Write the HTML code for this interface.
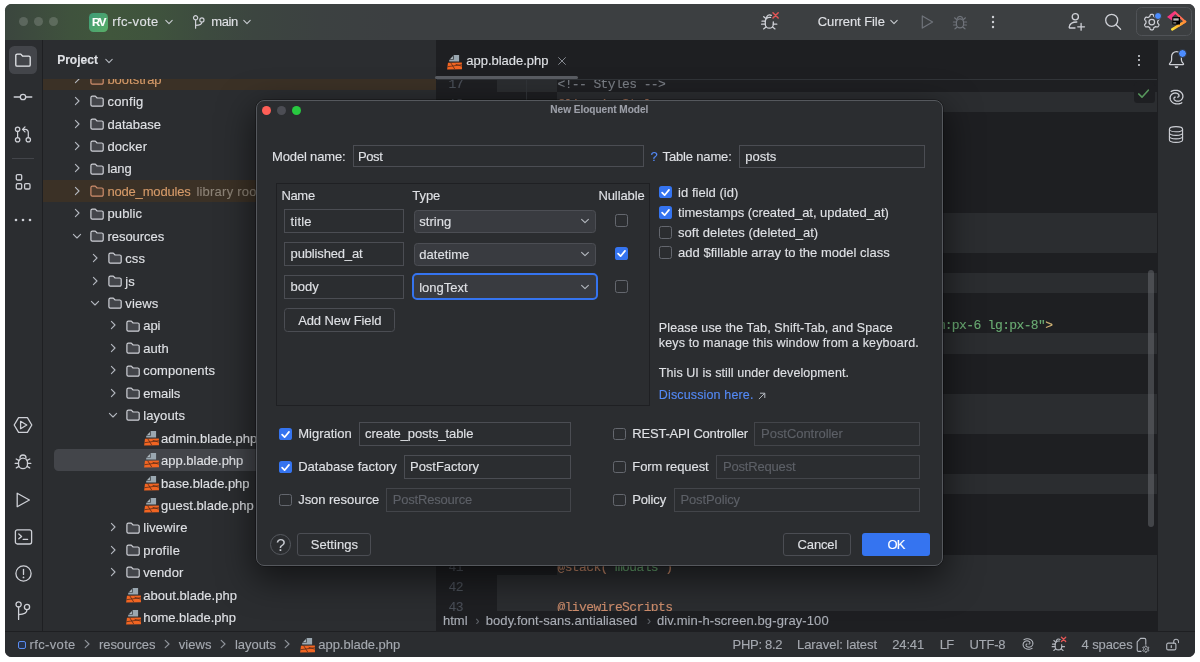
<!DOCTYPE html>
<html lang="en"><head><meta charset="utf-8"><title>New Eloquent Model</title><style>
html,body{margin:0;padding:0;background:#fff;}
body{width:1200px;height:662px;position:relative;overflow:hidden;will-change:transform;font-family:"Liberation Sans",sans-serif;}
.a{position:absolute;display:block;}
.t{position:absolute;display:block;white-space:pre;line-height:1;-webkit-text-stroke:0.120px currentColor;}
#win{position:absolute;left:5px;top:4px;width:1189.6px;height:653.300px;border-radius:6.500px;overflow:hidden;background:#2b2d30;}
#dlg{background:#2b2d30;border:1px solid #55585d;border-radius:8px;box-sizing:border-box;box-shadow:0 11px 34px 3px rgba(0,0,0,.55),0 0 0 .5px rgba(0,0,0,.5);}
</style></head><body>
<div id="win"><div class="a" style="left:-5px;top:-4px;width:1200px;height:662px;">
<div class="a" style="left:5.00px;top:4.00px;width:1189.60px;height:36.00px;background:linear-gradient(90deg,#3b463e 0px,#3d4b3e 28px,#3f523d 65px,#40563c 105px,#3f533d 150px,#3d4b3f 200px,#3c4540 250px,#3c4141 315px,#3c3f41 390px,#3c3f41 100%);"></div>
<div class="a" style="left:18.60px;top:17.00px;width:9.20px;height:9.20px;background:rgba(255,255,255,0.16);border-radius:50%;"></div>
<div class="a" style="left:33.70px;top:17.00px;width:9.20px;height:9.20px;background:rgba(255,255,255,0.16);border-radius:50%;"></div>
<div class="a" style="left:48.70px;top:17.00px;width:9.20px;height:9.20px;background:rgba(255,255,255,0.16);border-radius:50%;"></div>
<div class="a" style="left:89.00px;top:12.50px;width:19.00px;height:19.00px;border-radius:4.5px;background:linear-gradient(135deg,#3d9b78,#5aae67);"></div>
<span class="t" style="left:92.00px;top:16.57px;font-size:11.5px;color:#ffffff;font-weight:700;letter-spacing:-1.234px;">RV</span>
<span class="t" style="left:112.30px;top:14.90px;font-size:13px;color:#dfe1e5;letter-spacing:0.370px;">rfc-vote</span>
<svg class="a" style="left:162.60px;top:16.20px;" width="12" height="12" viewBox="0 0 12 12" fill="none"><path d="M2.8 4.4 L6 7.6 L9.2 4.4" stroke="#c9ccd1" stroke-width="1.1" stroke-linecap="round" stroke-linejoin="round"/></svg>
<svg class="a" style="left:192.00px;top:14.00px;" width="14" height="16" viewBox="0 0 14 16" fill="none"><circle cx="3.600" cy="3.800" r="2.100" stroke="#ced0d6" stroke-width="1.200"/><circle cx="9.900" cy="5.900" r="2.100" stroke="#ced0d6" stroke-width="1.200"/><path d="M3.600 6V14.200M3.600 11.400c4.600 0 6.300-1.100 6.300-3.400" stroke="#ced0d6" stroke-width="1.200" stroke-linecap="round"/></svg>
<span class="t" style="left:211.30px;top:14.90px;font-size:13px;color:#dfe1e5;letter-spacing:-0.395px;">main</span>
<svg class="a" style="left:241.10px;top:16.20px;" width="12" height="12" viewBox="0 0 12 12" fill="none"><path d="M2.8 4.4 L6 7.6 L9.2 4.4" stroke="#c9ccd1" stroke-width="1.1" stroke-linecap="round" stroke-linejoin="round"/></svg>
<svg class="a" style="left:759.00px;top:9.70px;" width="22" height="20" viewBox="0 0 22 20" fill="none"><g stroke="#ced0d6" stroke-width="1.3" stroke-linecap="round"><path d="M6.300 11.400a4 4 0 0 1 4-4h1.300"/><path d="M14.300 11.800v2.400a4 4 0 0 1-8 0v-2.800"/><path d="M7.600 8.100a3 3 0 0 1 4.700-2.700"/><path d="M6.300 11.200H3M6.300 14.200H2.600M7 17l-2.400 1.900M14.300 14.200h3.500M13.600 17l2.400 1.900M6.900 8.600L4.700 6.700"/></g><path d="M14 2.800l5.200 5.200M19.200 2.800L14 8" stroke="#e05555" stroke-width="1.5" stroke-linecap="round"/></svg>
<span class="t" style="left:817.80px;top:15.20px;font-size:13px;color:#dfe1e5;letter-spacing:-0.076px;">Current File</span>
<svg class="a" style="left:888.00px;top:16.20px;" width="12" height="12" viewBox="0 0 12 12" fill="none"><path d="M2.8 4.4 L6 7.6 L9.2 4.4" stroke="#c9ccd1" stroke-width="1.1" stroke-linecap="round" stroke-linejoin="round"/></svg>
<svg class="a" style="left:919.00px;top:13.70px;" width="16" height="16" viewBox="0 0 16 16" fill="none"><path d="M3.300 1.900L13.600 8 3.300 14.100Z" stroke="#6f737a" stroke-width="1.200" stroke-linejoin="round"/></svg>
<svg class="a" style="left:951.00px;top:12.60px;" width="18" height="18" viewBox="0 0 18 18" fill="none"><g stroke="#6f737a" stroke-width="1.200" stroke-linecap="round"><path d="M6.2 5.6a2.9 2.9 0 0 1 5.6 0"/><rect x="5.4" y="5.8" width="7.2" height="9" rx="3.6"/><path d="M5.4 9H2.4M5.4 12H2.6M12.6 9h3M12.6 12h2.8M5.6 6.6L3.6 4.8M12.4 6.6l2-1.8M6 14.2l-2 1.6M12 14.2l2 1.6"/></g></svg>
<svg class="a" style="left:989.80px;top:13.90px;" width="6" height="6" viewBox="0 0 6 6" fill="none"><circle cx="3" cy="3" r="1.2" fill="#ced0d6"/></svg>
<svg class="a" style="left:989.80px;top:19.00px;" width="6" height="6" viewBox="0 0 6 6" fill="none"><circle cx="3" cy="3" r="1.2" fill="#ced0d6"/></svg>
<svg class="a" style="left:989.80px;top:24.10px;" width="6" height="6" viewBox="0 0 6 6" fill="none"><circle cx="3" cy="3" r="1.2" fill="#ced0d6"/></svg>
<svg class="a" style="left:1066.00px;top:11.00px;" width="22" height="22" viewBox="0 0 22 22" fill="none"><g stroke="#ced0d6" stroke-width="1.300" stroke-linecap="round" stroke-linejoin="round"><circle cx="9.300" cy="5.700" r="3.100"/><path d="M9 17H4.100a.9 .9 0 0 1-.9-1C3.700 13 6.300 11 10.800 11"/><path d="M15.100 12.400v6.800M11.700 15.800h6.800"/></g></svg>
<svg class="a" style="left:1103.00px;top:12.00px;" width="20" height="20" viewBox="0 0 20 20" fill="none"><g stroke="#ced0d6" stroke-width="1.300" stroke-linecap="round"><circle cx="8.700" cy="8.300" r="6"/><path d="M13.100 12.800l4.500 4.500"/></g></svg>
<div class="a" style="left:1135.90px;top:7.40px;width:56.10px;height:28.70px;border:1px solid #505357;border-radius:5.500px;box-sizing:border-box;"></div>
<svg class="a" style="left:1142.00px;top:12.00px;" width="20" height="20" viewBox="0 0 20 20" fill="none"><path d="M15.65 10.10 L15.64 10.36 L15.63 10.61 L15.60 10.86 L15.70 11.14 L16.03 11.48 L16.37 11.86 L16.68 12.27 L16.95 12.70 L16.96 13.07 L16.82 13.38 L16.67 13.68 L16.51 13.97 L16.34 14.26 L16.15 14.55 L15.95 14.82 L15.63 14.99 L15.12 14.98 L14.61 14.91 L14.11 14.81 L13.65 14.69 L13.36 14.74 L13.16 14.89 L12.94 15.03 L12.73 15.17 L12.50 15.29 L12.27 15.40 L12.04 15.50 L11.85 15.73 L11.72 16.19 L11.56 16.67 L11.36 17.15 L11.12 17.59 L10.81 17.78 L10.48 17.82 L10.14 17.84 L9.80 17.85 L9.46 17.84 L9.12 17.82 L8.79 17.78 L8.48 17.59 L8.24 17.15 L8.04 16.67 L7.88 16.19 L7.75 15.73 L7.56 15.50 L7.33 15.40 L7.10 15.29 L6.88 15.17 L6.66 15.03 L6.44 14.89 L6.24 14.74 L5.95 14.69 L5.49 14.81 L4.99 14.91 L4.48 14.98 L3.97 14.99 L3.65 14.82 L3.45 14.55 L3.26 14.26 L3.09 13.98 L2.93 13.68 L2.78 13.38 L2.64 13.07 L2.65 12.70 L2.92 12.27 L3.23 11.86 L3.57 11.48 L3.90 11.14 L4.00 10.86 L3.97 10.61 L3.96 10.36 L3.95 10.10 L3.96 9.84 L3.97 9.59 L4.00 9.34 L3.90 9.06 L3.57 8.72 L3.23 8.34 L2.92 7.93 L2.65 7.50 L2.64 7.13 L2.78 6.82 L2.93 6.52 L3.09 6.22 L3.26 5.94 L3.45 5.65 L3.65 5.38 L3.97 5.21 L4.48 5.22 L4.99 5.29 L5.49 5.39 L5.95 5.51 L6.24 5.46 L6.44 5.31 L6.66 5.17 L6.87 5.03 L7.10 4.91 L7.33 4.80 L7.56 4.70 L7.75 4.47 L7.88 4.01 L8.04 3.53 L8.24 3.05 L8.48 2.61 L8.79 2.42 L9.12 2.38 L9.46 2.36 L9.80 2.35 L10.14 2.36 L10.48 2.38 L10.81 2.42 L11.12 2.61 L11.36 3.05 L11.56 3.53 L11.72 4.01 L11.85 4.47 L12.04 4.70 L12.27 4.80 L12.50 4.91 L12.72 5.03 L12.94 5.17 L13.16 5.31 L13.36 5.46 L13.65 5.51 L14.11 5.39 L14.61 5.29 L15.12 5.22 L15.63 5.21 L15.95 5.38 L16.15 5.65 L16.34 5.94 L16.51 6.23 L16.67 6.52 L16.82 6.82 L16.96 7.13 L16.95 7.50 L16.68 7.93 L16.37 8.34 L16.03 8.72 L15.70 9.06 L15.60 9.34 L15.63 9.59 L15.64 9.84Z" stroke="#ced0d6" stroke-width="1.250" stroke-linejoin="round"/><circle cx="9.800" cy="10.100" r="2.800" stroke="#ced0d6" stroke-width="1.250"/></svg>
<div class="a" style="left:1153.60px;top:11.70px;width:8.60px;height:8.60px;background:#4d8dff;border-radius:50%;border:1px solid #3c3f41;box-sizing:border-box;"></div>
<svg class="a" style="left:1166.00px;top:11.00px;" width="21" height="21" viewBox="0 0 21 21" fill="none"><defs><linearGradient id="jb1" x1="8" y1="0" x2="20" y2="11" gradientUnits="userSpaceOnUse"><stop offset="0" stop-color="#ff3d7a"/><stop offset="1" stop-color="#ff8a3a"/></linearGradient><linearGradient id="jb2" x1="19" y1="11" x2="5" y2="19" gradientUnits="userSpaceOnUse"><stop offset="0" stop-color="#ff8a3a"/><stop offset=".5" stop-color="#ffb52e"/><stop offset="1" stop-color="#ffe83a"/></linearGradient></defs><path d="M1 6.100L8.600 .1l2 1.900-4.200 4.100v3.600z" fill="#f5357f"/><path d="M8.600 1L19 10.700l-6.400 4.100" stroke="url(#jb1)" stroke-width="2"/><path d="M19 10.700L6.300 18.300" stroke="url(#jb2)" stroke-width="2.600" stroke-linecap="round"/><rect x="6.400" y="6.100" width="7.600" height="7.400" fill="#000"/><rect x="7.300" y="11.600" width="2.900" height=".7" fill="#fff"/><rect x="7.300" y="7.300" width="5.400" height="2.300" fill="#e8e8e8" opacity=".8"/></svg>
<div class="a" style="left:5.00px;top:40.00px;width:37.40px;height:591.20px;background:#2b2d30;"></div>
<div class="a" style="left:42.40px;top:40.00px;width:1.00px;height:591.20px;background:#1e1f22;"></div>
<div class="a" style="left:8.80px;top:45.50px;width:28.60px;height:28.60px;background:#43454a;border-radius:5.5px;"></div>
<svg class="a" style="left:14.00px;top:51.00px;" width="18" height="18" viewBox="0 0 18 18" fill="none"><path d="M1.800 4.400a1.300 1.300 0 0 1 1.300-1.300h3.700l1.900 2.100h6.200a1.300 1.300 0 0 1 1.300 1.300v7.400a1.300 1.300 0 0 1-1.300 1.300H3.100a1.300 1.300 0 0 1-1.300-1.300z" stroke="#e6e8ec" stroke-width="1.300" stroke-linejoin="round"/></svg>
<svg class="a" style="left:13.00px;top:88.00px;" width="20" height="18" viewBox="0 0 20 18" fill="none"><g stroke="#ced0d6" stroke-width="1.300" stroke-linecap="round"><circle cx="10" cy="9" r="2.700"/><path d="M1.200 9h6M12.800 9h6"/></g></svg>
<svg class="a" style="left:13.00px;top:125.00px;" width="20" height="22" viewBox="0 0 20 22" fill="none"><g stroke="#ced0d6" stroke-width="1.250" stroke-linecap="round" stroke-linejoin="round"><circle cx="4.600" cy="4.200" r="2.200"/><circle cx="4.600" cy="14.700" r="2.200"/><circle cx="15.300" cy="14.700" r="2.200"/><path d="M4.600 6.400v6.100M15.300 12.500V7.400a3 3 0 0 0-3-3H9.800M12 1.900L9.500 4.400l2.500 2.500"/></g></svg>
<div class="a" style="left:12.00px;top:158.40px;width:22.00px;height:1.00px;background:#43454a;"></div>
<svg class="a" style="left:14.00px;top:173.00px;" width="18" height="18" viewBox="0 0 18 18" fill="none"><g stroke="#ced0d6" stroke-width="1.300"><rect x="2.300" y="1.600" width="5.400" height="5.400" rx="1.200"/><rect x="2.300" y="10.600" width="5.400" height="5.400" rx="1.200"/><rect x="10.600" y="10.600" width="5.400" height="5.400" rx="1.200"/></g></svg>
<svg class="a" style="left:13.40px;top:216.50px;" width="6" height="6" viewBox="0 0 6 6" fill="none"><circle cx="3" cy="3" r="1.3" fill="#ced0d6"/></svg>
<svg class="a" style="left:20.00px;top:216.50px;" width="6" height="6" viewBox="0 0 6 6" fill="none"><circle cx="3" cy="3" r="1.3" fill="#ced0d6"/></svg>
<svg class="a" style="left:26.60px;top:216.50px;" width="6" height="6" viewBox="0 0 6 6" fill="none"><circle cx="3" cy="3" r="1.3" fill="#ced0d6"/></svg>
<svg class="a" style="left:13.00px;top:414.50px;" width="20" height="20" viewBox="0 0 20 20" fill="none"><g stroke="#ced0d6" stroke-width="1.300" stroke-linejoin="round"><path d="M5.600 2.600h8.800L18.800 10l-4.400 7.400H5.600L1.200 10z"/><path d="M7.600 6.300L13.800 10 7.600 13.700z"/></g></svg>
<svg class="a" style="left:13.00px;top:452.00px;" width="20" height="20" viewBox="0 0 20 20" fill="none"><g stroke="#ced0d6" stroke-width="1.300" stroke-linecap="round"><path d="M7 6a3 3 0 0 1 6 0"/><rect x="5.500" y="6.100" width="9" height="10.600" rx="4.500"/><path d="M5.500 11.400H2.200M14.500 11.400h3.300M5.800 8.400L3.200 7M14.200 8.400L16.800 7M5.900 14.400l-2.600 1.500M14.100 14.400l2.600 1.500"/></g></svg>
<svg class="a" style="left:14.00px;top:491.00px;" width="18" height="18" viewBox="0 0 18 18" fill="none"><path d="M3.200 2.200L15.400 9 3.200 15.800Z" stroke="#ced0d6" stroke-width="1.300" stroke-linejoin="round"/></svg>
<svg class="a" style="left:13.50px;top:528.00px;" width="19" height="18" viewBox="0 0 19 18" fill="none"><g stroke="#ced0d6" stroke-width="1.300" stroke-linecap="round" stroke-linejoin="round"><rect x="1.400" y="1.800" width="16.200" height="14.200" rx="2"/><path d="M4.800 6l2.800 2.400-2.800 2.400M9.200 11.400h4.400"/></g></svg>
<svg class="a" style="left:13.50px;top:564.30px;" width="19" height="19" viewBox="0 0 19 19" fill="none"><g stroke="#ced0d6" stroke-width="1.300" stroke-linecap="round"><circle cx="9.500" cy="9.500" r="7.600"/><path d="M9.500 5.400v5"/></g><circle cx="9.500" cy="13.400" r=".9" fill="#ced0d6"/></svg>
<svg class="a" style="left:14.00px;top:600.00px;" width="18" height="21" viewBox="0 0 18 21" fill="none"><g stroke="#ced0d6" stroke-width="1.300" stroke-linecap="round"><circle cx="4.600" cy="4.400" r="2.600"/><circle cx="13" cy="7" r="2.600"/><path d="M4.600 7V19.400M4.600 14.600c6.200 0 8.400-1.400 8.400-5"/></g></svg>
<div class="a" style="left:43.40px;top:40.00px;width:392.20px;height:591.20px;background:#2b2d30;"></div>
<div class="a" style="left:435.60px;top:40.00px;width:1.00px;height:591.20px;background:#1e1f22;"></div>
<div class="a" style="left:43.4px;top:79.4px;width:392.2px;height:551.8px;overflow:hidden;">
<div class="a" style="left:0.00px;top:-11.84px;width:392.20px;height:22.43px;background:#3b3126;"></div>
<svg class="a" style="left:27.60px;top:-6.63px;" width="12" height="12" viewBox="0 0 12 12" fill="none"><path d="M4.400 2.400L8 6 4.400 9.600" stroke="#b4b8bf" stroke-width="1.100" stroke-linecap="round" stroke-linejoin="round"/></svg>
<svg class="a" style="left:46.90px;top:-6.43px;" width="15" height="13" viewBox="0 0 15 13" fill="none"><path d="M0.9 2.7a1.5 1.5 0 0 1 1.5-1.5h2.9l1.8 1.8h4.600a1.500 1.500 0 0 1 1.500 1.500v5.200a1.500 1.500 0 0 1-1.500 1.500H2.400a1.500 1.500 0 0 1-1.500-1.500z" stroke="#cf8e6d" fill="#4a3a2c" stroke-width="1.200" stroke-linejoin="round"/></svg>
<span class="t" style="left:64.00px;top:-6.63px;font-size:13px;color:#d59a69;">bootstrap</span>
<svg class="a" style="left:27.60px;top:15.80px;" width="12" height="12" viewBox="0 0 12 12" fill="none"><path d="M4.400 2.400L8 6 4.400 9.600" stroke="#b4b8bf" stroke-width="1.100" stroke-linecap="round" stroke-linejoin="round"/></svg>
<svg class="a" style="left:46.90px;top:16.00px;" width="15" height="13" viewBox="0 0 15 13" fill="none"><path d="M0.9 2.7a1.5 1.5 0 0 1 1.5-1.5h2.9l1.8 1.8h4.600a1.500 1.500 0 0 1 1.500 1.500v5.200a1.500 1.500 0 0 1-1.500 1.500H2.400a1.500 1.500 0 0 1-1.500-1.500z" stroke="#ced0d6" fill="#43454a" stroke-width="1.200" stroke-linejoin="round"/></svg>
<span class="t" style="left:64.00px;top:15.80px;font-size:13px;color:#dfe1e5;letter-spacing:0.235px;">config</span>
<svg class="a" style="left:27.60px;top:38.23px;" width="12" height="12" viewBox="0 0 12 12" fill="none"><path d="M4.400 2.400L8 6 4.400 9.600" stroke="#b4b8bf" stroke-width="1.100" stroke-linecap="round" stroke-linejoin="round"/></svg>
<svg class="a" style="left:46.90px;top:38.43px;" width="15" height="13" viewBox="0 0 15 13" fill="none"><path d="M0.9 2.7a1.5 1.5 0 0 1 1.5-1.5h2.9l1.8 1.8h4.600a1.500 1.500 0 0 1 1.500 1.500v5.200a1.500 1.500 0 0 1-1.500 1.500H2.400a1.500 1.500 0 0 1-1.500-1.500z" stroke="#ced0d6" fill="#43454a" stroke-width="1.200" stroke-linejoin="round"/></svg>
<span class="t" style="left:64.00px;top:38.23px;font-size:13px;color:#dfe1e5;letter-spacing:0.013px;">database</span>
<svg class="a" style="left:27.60px;top:60.66px;" width="12" height="12" viewBox="0 0 12 12" fill="none"><path d="M4.400 2.400L8 6 4.400 9.600" stroke="#b4b8bf" stroke-width="1.100" stroke-linecap="round" stroke-linejoin="round"/></svg>
<svg class="a" style="left:46.90px;top:60.86px;" width="15" height="13" viewBox="0 0 15 13" fill="none"><path d="M0.9 2.7a1.5 1.5 0 0 1 1.5-1.5h2.9l1.8 1.8h4.600a1.500 1.500 0 0 1 1.500 1.500v5.200a1.500 1.500 0 0 1-1.500 1.500H2.400a1.500 1.500 0 0 1-1.500-1.500z" stroke="#ced0d6" fill="#43454a" stroke-width="1.200" stroke-linejoin="round"/></svg>
<span class="t" style="left:64.00px;top:60.66px;font-size:13px;color:#dfe1e5;letter-spacing:0.130px;">docker</span>
<svg class="a" style="left:27.60px;top:83.09px;" width="12" height="12" viewBox="0 0 12 12" fill="none"><path d="M4.400 2.400L8 6 4.400 9.600" stroke="#b4b8bf" stroke-width="1.100" stroke-linecap="round" stroke-linejoin="round"/></svg>
<svg class="a" style="left:46.90px;top:83.29px;" width="15" height="13" viewBox="0 0 15 13" fill="none"><path d="M0.9 2.7a1.5 1.5 0 0 1 1.5-1.5h2.9l1.8 1.8h4.600a1.500 1.500 0 0 1 1.500 1.500v5.200a1.500 1.500 0 0 1-1.500 1.500H2.400a1.500 1.500 0 0 1-1.500-1.500z" stroke="#ced0d6" fill="#43454a" stroke-width="1.200" stroke-linejoin="round"/></svg>
<span class="t" style="left:64.00px;top:83.09px;font-size:13px;color:#dfe1e5;letter-spacing:-0.070px;">lang</span>
<div class="a" style="left:0.00px;top:100.31px;width:392.20px;height:22.43px;background:#3b3126;"></div>
<svg class="a" style="left:27.60px;top:105.52px;" width="12" height="12" viewBox="0 0 12 12" fill="none"><path d="M4.400 2.400L8 6 4.400 9.600" stroke="#b4b8bf" stroke-width="1.100" stroke-linecap="round" stroke-linejoin="round"/></svg>
<svg class="a" style="left:46.90px;top:105.72px;" width="15" height="13" viewBox="0 0 15 13" fill="none"><path d="M0.9 2.7a1.5 1.5 0 0 1 1.5-1.5h2.9l1.8 1.8h4.600a1.500 1.500 0 0 1 1.500 1.500v5.200a1.500 1.500 0 0 1-1.500 1.500H2.400a1.500 1.500 0 0 1-1.500-1.500z" stroke="#cf8e6d" fill="#4a3a2c" stroke-width="1.200" stroke-linejoin="round"/></svg>
<span class="t" style="left:64.00px;top:105.52px;font-size:13px;color:#d59a69;letter-spacing:-0.174px;">node_modules</span>
<span class="t" style="left:153.00px;top:105.52px;font-size:13px;color:#8c8377;letter-spacing:0.224px;">library root</span>
<svg class="a" style="left:27.60px;top:127.95px;" width="12" height="12" viewBox="0 0 12 12" fill="none"><path d="M4.400 2.400L8 6 4.400 9.600" stroke="#b4b8bf" stroke-width="1.100" stroke-linecap="round" stroke-linejoin="round"/></svg>
<svg class="a" style="left:46.90px;top:128.15px;" width="15" height="13" viewBox="0 0 15 13" fill="none"><path d="M0.9 2.7a1.5 1.5 0 0 1 1.5-1.5h2.9l1.8 1.8h4.600a1.500 1.500 0 0 1 1.500 1.500v5.200a1.500 1.500 0 0 1-1.500 1.500H2.400a1.500 1.500 0 0 1-1.500-1.500z" stroke="#ced0d6" fill="#43454a" stroke-width="1.200" stroke-linejoin="round"/></svg>
<span class="t" style="left:64.00px;top:127.95px;font-size:13px;color:#dfe1e5;letter-spacing:0.139px;">public</span>
<svg class="a" style="left:27.60px;top:150.38px;" width="12" height="12" viewBox="0 0 12 12" fill="none"><path d="M2.400 4.400L6 8l3.600-3.600" stroke="#b4b8bf" stroke-width="1.100" stroke-linecap="round" stroke-linejoin="round"/></svg>
<svg class="a" style="left:46.90px;top:150.58px;" width="15" height="13" viewBox="0 0 15 13" fill="none"><path d="M0.9 2.7a1.5 1.5 0 0 1 1.5-1.5h2.9l1.8 1.8h4.600a1.500 1.500 0 0 1 1.500 1.500v5.200a1.500 1.500 0 0 1-1.500 1.500H2.400a1.500 1.500 0 0 1-1.500-1.500z" stroke="#ced0d6" fill="#43454a" stroke-width="1.200" stroke-linejoin="round"/></svg>
<span class="t" style="left:64.00px;top:150.38px;font-size:13px;color:#dfe1e5;letter-spacing:-0.020px;">resources</span>
<svg class="a" style="left:45.50px;top:172.81px;" width="12" height="12" viewBox="0 0 12 12" fill="none"><path d="M4.400 2.400L8 6 4.400 9.600" stroke="#b4b8bf" stroke-width="1.100" stroke-linecap="round" stroke-linejoin="round"/></svg>
<svg class="a" style="left:64.80px;top:173.01px;" width="15" height="13" viewBox="0 0 15 13" fill="none"><path d="M0.9 2.7a1.5 1.5 0 0 1 1.5-1.5h2.9l1.8 1.8h4.600a1.500 1.500 0 0 1 1.500 1.500v5.200a1.500 1.500 0 0 1-1.500 1.500H2.400a1.500 1.500 0 0 1-1.500-1.500z" stroke="#ced0d6" fill="#43454a" stroke-width="1.200" stroke-linejoin="round"/></svg>
<span class="t" style="left:81.90px;top:172.81px;font-size:13px;color:#dfe1e5;letter-spacing:0.067px;">css</span>
<svg class="a" style="left:45.50px;top:195.24px;" width="12" height="12" viewBox="0 0 12 12" fill="none"><path d="M4.400 2.400L8 6 4.400 9.600" stroke="#b4b8bf" stroke-width="1.100" stroke-linecap="round" stroke-linejoin="round"/></svg>
<svg class="a" style="left:64.80px;top:195.44px;" width="15" height="13" viewBox="0 0 15 13" fill="none"><path d="M0.9 2.7a1.5 1.5 0 0 1 1.5-1.5h2.9l1.8 1.8h4.600a1.500 1.500 0 0 1 1.500 1.500v5.200a1.500 1.500 0 0 1-1.500 1.500H2.400a1.500 1.500 0 0 1-1.500-1.500z" stroke="#ced0d6" fill="#43454a" stroke-width="1.200" stroke-linejoin="round"/></svg>
<span class="t" style="left:81.90px;top:195.24px;font-size:13px;color:#dfe1e5;letter-spacing:0.106px;">js</span>
<svg class="a" style="left:45.50px;top:217.67px;" width="12" height="12" viewBox="0 0 12 12" fill="none"><path d="M2.400 4.400L6 8l3.600-3.600" stroke="#b4b8bf" stroke-width="1.100" stroke-linecap="round" stroke-linejoin="round"/></svg>
<svg class="a" style="left:64.80px;top:217.87px;" width="15" height="13" viewBox="0 0 15 13" fill="none"><path d="M0.9 2.7a1.5 1.5 0 0 1 1.5-1.5h2.9l1.8 1.8h4.600a1.500 1.500 0 0 1 1.500 1.500v5.200a1.500 1.500 0 0 1-1.500 1.500H2.400a1.500 1.500 0 0 1-1.500-1.500z" stroke="#ced0d6" fill="#43454a" stroke-width="1.200" stroke-linejoin="round"/></svg>
<span class="t" style="left:81.90px;top:217.67px;font-size:13px;color:#dfe1e5;letter-spacing:0.139px;">views</span>
<svg class="a" style="left:63.40px;top:240.10px;" width="12" height="12" viewBox="0 0 12 12" fill="none"><path d="M4.400 2.400L8 6 4.400 9.600" stroke="#b4b8bf" stroke-width="1.100" stroke-linecap="round" stroke-linejoin="round"/></svg>
<svg class="a" style="left:82.70px;top:240.30px;" width="15" height="13" viewBox="0 0 15 13" fill="none"><path d="M0.9 2.7a1.5 1.5 0 0 1 1.5-1.5h2.9l1.8 1.8h4.600a1.500 1.500 0 0 1 1.500 1.500v5.200a1.500 1.500 0 0 1-1.500 1.500H2.400a1.500 1.500 0 0 1-1.500-1.500z" stroke="#ced0d6" fill="#43454a" stroke-width="1.200" stroke-linejoin="round"/></svg>
<span class="t" style="left:99.80px;top:240.10px;font-size:13px;color:#dfe1e5;letter-spacing:-0.016px;">api</span>
<svg class="a" style="left:63.40px;top:262.53px;" width="12" height="12" viewBox="0 0 12 12" fill="none"><path d="M4.400 2.400L8 6 4.400 9.600" stroke="#b4b8bf" stroke-width="1.100" stroke-linecap="round" stroke-linejoin="round"/></svg>
<svg class="a" style="left:82.70px;top:262.73px;" width="15" height="13" viewBox="0 0 15 13" fill="none"><path d="M0.9 2.7a1.5 1.5 0 0 1 1.5-1.5h2.9l1.8 1.8h4.600a1.500 1.500 0 0 1 1.500 1.500v5.200a1.500 1.500 0 0 1-1.500 1.500H2.400a1.500 1.500 0 0 1-1.500-1.500z" stroke="#ced0d6" fill="#43454a" stroke-width="1.200" stroke-linejoin="round"/></svg>
<span class="t" style="left:99.80px;top:262.53px;font-size:13px;color:#dfe1e5;letter-spacing:0.074px;">auth</span>
<svg class="a" style="left:63.40px;top:284.96px;" width="12" height="12" viewBox="0 0 12 12" fill="none"><path d="M4.400 2.400L8 6 4.400 9.600" stroke="#b4b8bf" stroke-width="1.100" stroke-linecap="round" stroke-linejoin="round"/></svg>
<svg class="a" style="left:82.70px;top:285.16px;" width="15" height="13" viewBox="0 0 15 13" fill="none"><path d="M0.9 2.7a1.5 1.5 0 0 1 1.5-1.5h2.9l1.8 1.8h4.600a1.500 1.500 0 0 1 1.500 1.500v5.200a1.500 1.500 0 0 1-1.500 1.500H2.400a1.500 1.500 0 0 1-1.500-1.500z" stroke="#ced0d6" fill="#43454a" stroke-width="1.200" stroke-linejoin="round"/></svg>
<span class="t" style="left:99.80px;top:284.96px;font-size:13px;color:#dfe1e5;letter-spacing:0.098px;">components</span>
<svg class="a" style="left:63.40px;top:307.39px;" width="12" height="12" viewBox="0 0 12 12" fill="none"><path d="M4.400 2.400L8 6 4.400 9.600" stroke="#b4b8bf" stroke-width="1.100" stroke-linecap="round" stroke-linejoin="round"/></svg>
<svg class="a" style="left:82.70px;top:307.59px;" width="15" height="13" viewBox="0 0 15 13" fill="none"><path d="M0.9 2.7a1.5 1.5 0 0 1 1.5-1.5h2.9l1.8 1.8h4.600a1.500 1.500 0 0 1 1.500 1.500v5.200a1.500 1.500 0 0 1-1.500 1.500H2.400a1.500 1.500 0 0 1-1.500-1.500z" stroke="#ced0d6" fill="#43454a" stroke-width="1.200" stroke-linejoin="round"/></svg>
<span class="t" style="left:99.80px;top:307.39px;font-size:13px;color:#dfe1e5;letter-spacing:-0.111px;">emails</span>
<svg class="a" style="left:63.40px;top:329.82px;" width="12" height="12" viewBox="0 0 12 12" fill="none"><path d="M2.400 4.400L6 8l3.600-3.600" stroke="#b4b8bf" stroke-width="1.100" stroke-linecap="round" stroke-linejoin="round"/></svg>
<svg class="a" style="left:82.70px;top:330.02px;" width="15" height="13" viewBox="0 0 15 13" fill="none"><path d="M0.9 2.7a1.5 1.5 0 0 1 1.5-1.5h2.9l1.8 1.8h4.600a1.500 1.500 0 0 1 1.500 1.500v5.200a1.500 1.500 0 0 1-1.500 1.500H2.400a1.500 1.500 0 0 1-1.500-1.500z" stroke="#ced0d6" fill="#43454a" stroke-width="1.200" stroke-linejoin="round"/></svg>
<span class="t" style="left:99.80px;top:329.82px;font-size:13px;color:#dfe1e5;letter-spacing:0.101px;">layouts</span>
<svg class="a" style="left:100.40px;top:350.65px;" width="16" height="16" viewBox="0 0 16 16" fill="none"><path d="M6.650 1.100H12.100V7.500H2.200V5.750H6.650Z" fill="#9aa7b0"/><path d="M5.950 2.100V5.150H2.900Z" fill="#aeb9c0"/><path d="M1 8.800L14.850 8.600 15 15.200 .1 15.400Z" fill="#f26522"/><path d="M.5 12.700L14.900 10.700M3.700 8.700l4 6.300M8.600 10.300l6.200 1.900" stroke="#5a2c18" stroke-width=".8"/></svg>
<span class="t" style="left:117.70px;top:352.25px;font-size:13px;color:#dfe1e5;">admin.blade.php</span>
<div class="a" style="left:10.50px;top:369.68px;width:390.00px;height:22.00px;background:#43454a;border-radius:4.500px;"></div>
<svg class="a" style="left:100.40px;top:373.08px;" width="16" height="16" viewBox="0 0 16 16" fill="none"><path d="M6.650 1.100H12.100V7.500H2.200V5.750H6.650Z" fill="#9aa7b0"/><path d="M5.950 2.100V5.150H2.900Z" fill="#aeb9c0"/><path d="M1 8.800L14.850 8.600 15 15.200 .1 15.400Z" fill="#f26522"/><path d="M.5 12.700L14.900 10.700M3.700 8.700l4 6.300M8.600 10.300l6.200 1.900" stroke="#5a2c18" stroke-width=".8"/></svg>
<span class="t" style="left:117.70px;top:374.68px;font-size:13px;color:#dfe1e5;letter-spacing:-0.016px;">app.blade.php</span>
<svg class="a" style="left:100.40px;top:395.51px;" width="16" height="16" viewBox="0 0 16 16" fill="none"><path d="M6.650 1.100H12.100V7.500H2.200V5.750H6.650Z" fill="#9aa7b0"/><path d="M5.950 2.100V5.150H2.900Z" fill="#aeb9c0"/><path d="M1 8.800L14.850 8.600 15 15.200 .1 15.400Z" fill="#f26522"/><path d="M.5 12.700L14.900 10.700M3.700 8.700l4 6.300M8.600 10.300l6.200 1.900" stroke="#5a2c18" stroke-width=".8"/></svg>
<span class="t" style="left:117.70px;top:397.11px;font-size:13px;color:#dfe1e5;letter-spacing:-0.037px;">base.blade.php</span>
<svg class="a" style="left:100.40px;top:417.94px;" width="16" height="16" viewBox="0 0 16 16" fill="none"><path d="M6.650 1.100H12.100V7.500H2.200V5.750H6.650Z" fill="#9aa7b0"/><path d="M5.950 2.100V5.150H2.900Z" fill="#aeb9c0"/><path d="M1 8.800L14.850 8.600 15 15.200 .1 15.400Z" fill="#f26522"/><path d="M.5 12.700L14.900 10.700M3.700 8.700l4 6.300M8.600 10.300l6.200 1.900" stroke="#5a2c18" stroke-width=".8"/></svg>
<span class="t" style="left:117.70px;top:419.54px;font-size:13px;color:#dfe1e5;letter-spacing:0.012px;">guest.blade.php</span>
<svg class="a" style="left:63.40px;top:441.97px;" width="12" height="12" viewBox="0 0 12 12" fill="none"><path d="M4.400 2.400L8 6 4.400 9.600" stroke="#b4b8bf" stroke-width="1.100" stroke-linecap="round" stroke-linejoin="round"/></svg>
<svg class="a" style="left:82.70px;top:442.17px;" width="15" height="13" viewBox="0 0 15 13" fill="none"><path d="M0.9 2.7a1.5 1.5 0 0 1 1.5-1.5h2.9l1.8 1.8h4.600a1.500 1.500 0 0 1 1.500 1.500v5.200a1.500 1.500 0 0 1-1.500 1.500H2.400a1.500 1.500 0 0 1-1.500-1.500z" stroke="#ced0d6" fill="#43454a" stroke-width="1.200" stroke-linejoin="round"/></svg>
<span class="t" style="left:99.80px;top:441.97px;font-size:13px;color:#dfe1e5;letter-spacing:0.120px;">livewire</span>
<svg class="a" style="left:63.40px;top:464.40px;" width="12" height="12" viewBox="0 0 12 12" fill="none"><path d="M4.400 2.400L8 6 4.400 9.600" stroke="#b4b8bf" stroke-width="1.100" stroke-linecap="round" stroke-linejoin="round"/></svg>
<svg class="a" style="left:82.70px;top:464.60px;" width="15" height="13" viewBox="0 0 15 13" fill="none"><path d="M0.9 2.7a1.5 1.5 0 0 1 1.5-1.5h2.9l1.8 1.8h4.600a1.500 1.500 0 0 1 1.500 1.500v5.200a1.500 1.500 0 0 1-1.500 1.500H2.400a1.500 1.500 0 0 1-1.500-1.500z" stroke="#ced0d6" fill="#43454a" stroke-width="1.200" stroke-linejoin="round"/></svg>
<span class="t" style="left:99.80px;top:464.40px;font-size:13px;color:#dfe1e5;letter-spacing:0.213px;">profile</span>
<svg class="a" style="left:63.40px;top:486.83px;" width="12" height="12" viewBox="0 0 12 12" fill="none"><path d="M4.400 2.400L8 6 4.400 9.600" stroke="#b4b8bf" stroke-width="1.100" stroke-linecap="round" stroke-linejoin="round"/></svg>
<svg class="a" style="left:82.70px;top:487.03px;" width="15" height="13" viewBox="0 0 15 13" fill="none"><path d="M0.9 2.7a1.5 1.5 0 0 1 1.5-1.5h2.9l1.8 1.8h4.600a1.500 1.500 0 0 1 1.500 1.500v5.200a1.500 1.500 0 0 1-1.500 1.500H2.400a1.500 1.500 0 0 1-1.500-1.500z" stroke="#ced0d6" fill="#43454a" stroke-width="1.200" stroke-linejoin="round"/></svg>
<span class="t" style="left:99.80px;top:486.83px;font-size:13px;color:#dfe1e5;letter-spacing:0.075px;">vendor</span>
<svg class="a" style="left:82.50px;top:507.66px;" width="16" height="16" viewBox="0 0 16 16" fill="none"><path d="M6.650 1.100H12.100V7.500H2.200V5.750H6.650Z" fill="#9aa7b0"/><path d="M5.950 2.100V5.150H2.900Z" fill="#aeb9c0"/><path d="M1 8.800L14.850 8.600 15 15.200 .1 15.400Z" fill="#f26522"/><path d="M.5 12.700L14.900 10.700M3.700 8.700l4 6.300M8.600 10.300l6.200 1.900" stroke="#5a2c18" stroke-width=".8"/></svg>
<span class="t" style="left:99.80px;top:509.26px;font-size:13px;color:#dfe1e5;letter-spacing:0.036px;">about.blade.php</span>
<svg class="a" style="left:82.50px;top:530.09px;" width="16" height="16" viewBox="0 0 16 16" fill="none"><path d="M6.650 1.100H12.100V7.500H2.200V5.750H6.650Z" fill="#9aa7b0"/><path d="M5.950 2.100V5.150H2.900Z" fill="#aeb9c0"/><path d="M1 8.800L14.850 8.600 15 15.200 .1 15.400Z" fill="#f26522"/><path d="M.5 12.700L14.900 10.700M3.700 8.700l4 6.300M8.600 10.300l6.200 1.900" stroke="#5a2c18" stroke-width=".8"/></svg>
<span class="t" style="left:99.80px;top:531.69px;font-size:13px;color:#dfe1e5;letter-spacing:-0.039px;">home.blade.php</span>
</div>
<span class="t" style="left:57.20px;top:54.04px;font-size:12px;color:#dfe1e5;font-weight:700;letter-spacing:0.002px;">Project</span>
<svg class="a" style="left:103.00px;top:55.00px;" width="12" height="12" viewBox="0 0 12 12" fill="none"><path d="M2.8 4.4 L6 7.6 L9.2 4.4" stroke="#b4b8bf" stroke-width="1.1" stroke-linecap="round" stroke-linejoin="round"/></svg>
<div class="a" style="left:436.60px;top:40.00px;width:720.50px;height:591.20px;background:#1e1f22;"></div>
<div class="a" style="left:436.60px;top:79.00px;width:720.50px;height:1.00px;background:#313438;"></div>
<svg class="a" style="left:446.50px;top:53.80px;" width="16" height="16" viewBox="0 0 16 16" fill="none"><path d="M6.650 1.100H12.100V7.500H2.200V5.750H6.650Z" fill="#9aa7b0"/><path d="M5.950 2.100V5.150H2.900Z" fill="#aeb9c0"/><path d="M1 8.800L14.850 8.600 15 15.200 .1 15.400Z" fill="#f26522"/><path d="M.5 12.700L14.900 10.700M3.700 8.700l4 6.300M8.600 10.300l6.200 1.900" stroke="#5a2c18" stroke-width=".8"/></svg>
<span class="t" style="left:466.30px;top:54.00px;font-size:13px;color:#dfe1e5;letter-spacing:-0.024px;">app.blade.php</span>
<svg class="a" style="left:556.40px;top:54.60px;" width="12" height="12" viewBox="0 0 12 12" fill="none"><path d="M2.600 2.600l6.800 6.800M9.400 2.600L2.600 9.400" stroke="#868a91" stroke-width="1" stroke-linecap="round"/></svg>
<div class="a" style="left:435.40px;top:76.30px;width:142.20px;height:3.20px;background:#5a5d63;border-radius:1.600px;"></div>
<svg class="a" style="left:1135.60px;top:52.80px;" width="6" height="6" viewBox="0 0 6 6" fill="none"><circle cx="3" cy="3" r="1.05" fill="#ced0d6"/></svg>
<svg class="a" style="left:1135.60px;top:57.45px;" width="6" height="6" viewBox="0 0 6 6" fill="none"><circle cx="3" cy="3" r="1.05" fill="#ced0d6"/></svg>
<svg class="a" style="left:1135.60px;top:62.10px;" width="6" height="6" viewBox="0 0 6 6" fill="none"><circle cx="3" cy="3" r="1.05" fill="#ced0d6"/></svg>
<div class="a" style="left:436.6px;top:80px;width:720.4999999999999px;height:531.200px;overflow:hidden;">
<div class="a" style="left:60.90px;top:-8.31px;width:60.00px;height:20.13px;background:#2b2d30;"></div>
<div class="a" style="left:120.90px;top:11.81px;width:599.60px;height:20.13px;background:#2b2d30;"></div>
<div class="a" style="left:60.90px;top:132.59px;width:659.60px;height:40.26px;background:#2b2d30;"></div>
<div class="a" style="left:60.90px;top:192.98px;width:659.60px;height:20.13px;background:#2b2d30;"></div>
<div class="a" style="left:60.90px;top:253.38px;width:659.60px;height:20.13px;background:#2b2d30;"></div>
<div class="a" style="left:60.90px;top:313.76px;width:659.60px;height:40.26px;background:#2b2d30;"></div>
<div class="a" style="left:60.90px;top:394.28px;width:659.60px;height:20.13px;background:#2b2d30;"></div>
<div class="a" style="left:120.90px;top:474.80px;width:599.60px;height:20.13px;background:#2b2d30;"></div>
<div class="a" style="left:60.90px;top:494.93px;width:659.60px;height:40.26px;background:#2b2d30;"></div>
<div class="a" style="left:89.90px;top:-7.00px;width:0.80px;height:40.00px;background:#313438;"></div>
<span class="t" style="left:12.00px;top:-2.35px;font-size:13px;color:#4b5059;font-family:Liberation Mono,DejaVu Sans Mono,monospace;letter-spacing:-0.620px;">17</span>
<span class="t" style="left:12.00px;top:17.78px;font-size:13px;color:#4b5059;font-family:Liberation Mono,DejaVu Sans Mono,monospace;letter-spacing:-0.620px;">18</span>
<span class="t" style="left:12.00px;top:480.77px;font-size:13px;color:#4b5059;font-family:Liberation Mono,DejaVu Sans Mono,monospace;letter-spacing:-0.620px;">41</span>
<span class="t" style="left:12.00px;top:500.90px;font-size:13px;color:#4b5059;font-family:Liberation Mono,DejaVu Sans Mono,monospace;letter-spacing:-0.620px;">42</span>
<span class="t" style="left:12.00px;top:521.03px;font-size:13px;color:#4b5059;font-family:Liberation Mono,DejaVu Sans Mono,monospace;letter-spacing:-0.620px;">43</span>
<span class="t" style="left:120.90px;top:-2.35px;font-size:13px;color:#7a7e85;font-family:Liberation Mono,DejaVu Sans Mono,monospace;letter-spacing:-0.620px;">&lt;!-- Styles --&gt;</span>
<span class="t" style="left:120.90px;top:17.78px;font-size:13px;color:#cf8e6d;font-family:Liberation Mono,DejaVu Sans Mono,monospace;letter-spacing:-0.620px;">@livewireStyles</span>
<span class="t" style="left:493.74px;top:239.21px;font-size:13px;color:#6aab73;font-family:Liberation Mono,DejaVu Sans Mono,monospace;letter-spacing:-0.620px;">sm:px-6 lg:px-8&quot;</span>
<span class="t" style="left:608.62px;top:239.21px;font-size:13px;color:#d5b778;font-family:Liberation Mono,DejaVu Sans Mono,monospace;letter-spacing:-0.620px;">&gt;</span>
<span class="t" style="left:120.90px;top:480.77px;font-size:13px;color:#cf8e6d;font-family:Liberation Mono,DejaVu Sans Mono,monospace;letter-spacing:-0.620px;">@stack(</span>
<span class="t" style="left:171.16px;top:480.77px;font-size:13px;color:#6aab73;font-family:Liberation Mono,DejaVu Sans Mono,monospace;letter-spacing:-0.620px;">&#x27;modals&#x27;</span>
<span class="t" style="left:228.60px;top:480.77px;font-size:13px;color:#cf8e6d;font-family:Liberation Mono,DejaVu Sans Mono,monospace;letter-spacing:-0.620px;">)</span>
<span class="t" style="left:120.90px;top:521.03px;font-size:13px;color:#cf8e6d;font-family:Liberation Mono,DejaVu Sans Mono,monospace;letter-spacing:-0.620px;">@livewireScripts</span>
<div class="a" style="left:697.20px;top:2.00px;width:21.20px;height:21.40px;background:#1e1f22;border-radius:3.500px;"></div>
<svg class="a" style="left:700.6999999999999px;top:7.5px" width="14" height="12" viewBox="0 0 14 12" fill="none"><path d="M1.800 6l3.200 3.200 6.300-7" stroke="#57965c" stroke-width="1.650" stroke-linecap="round" stroke-linejoin="round"/></svg>
<div class="a" style="left:711.30px;top:190.40px;width:6.00px;height:256.60px;background:rgba(120,122,128,0.42);border-radius:3px;"></div>
</div>
<div class="a" style="left:436.60px;top:611.20px;width:720.50px;height:20.00px;background:#1e1f22;"></div>
<span class="t" style="left:443.00px;top:614.20px;font-size:13px;color:#a9adb5;letter-spacing:0.010px;">html</span>
<span class="t" style="left:475.50px;top:615.04px;font-size:12px;color:#5f6369;">›</span>
<span class="t" style="left:485.80px;top:614.20px;font-size:13px;color:#a9adb5;letter-spacing:0.051px;">body.font-sans.antialiased</span>
<span class="t" style="left:647.00px;top:615.04px;font-size:12px;color:#5f6369;">›</span>
<span class="t" style="left:657.00px;top:614.20px;font-size:13px;color:#a9adb5;letter-spacing:0.106px;">div.min-h-screen.bg-gray-100</span>
<div class="a" style="left:1157.10px;top:40.00px;width:1.00px;height:591.20px;background:#1e1f22;"></div>
<div class="a" style="left:1158.10px;top:40.00px;width:36.50px;height:591.20px;background:#2b2d30;"></div>
<svg class="a" style="left:1166.00px;top:49.00px;" width="21" height="21" viewBox="0 0 21 21" fill="none"><path d="M5.600 11V7.500a4.900 4.900 0 0 1 9.800 0V11c0 1.500.8 2.400 2 3.600.4.400.100 1-.400 1H4c-.500 0-.800-.600-.400-1 1.200-1.200 2-2.100 2-3.600z" stroke="#ced0d6" stroke-width="1.250" stroke-linejoin="round"/><path d="M8.600 17.300h3.800a1.900 1.900 0 0 1-3.800 0z" fill="#ced0d6"/></svg>
<div class="a" style="left:1177.70px;top:48.60px;width:9.60px;height:9.60px;background:#4d8dff;border-radius:50%;border:1.200px solid #2b2d30;box-sizing:border-box;"></div>
<svg class="a" style="left:1166.00px;top:86.50px;" width="21" height="21" viewBox="0 0 21 21" fill="none"><path d="M9.29 10.10 L8.73 10.24 L8.46 10.42 L8.26 10.64 L8.12 10.88 L8.03 11.14 L7.99 11.41 L8.00 11.69 L8.05 11.98 L8.15 12.26 L8.29 12.54 L8.47 12.81 L8.69 13.06 L8.95 13.30 L9.25 13.52 L9.58 13.71 L9.94 13.87 L10.32 14.01 L10.73 14.11 L11.16 14.17 L11.60 14.20 L12.06 14.19 L12.51 14.14 L12.97 14.05 L13.43 13.91 L13.88 13.74 L14.31 13.52 L14.72 13.27 L15.11 12.97 L15.47 12.64 L15.80 12.28 L16.10 11.88 L16.35 11.46 L16.56 11.01 L16.72 10.53 L16.83 10.04 L16.89 9.54 L16.89 9.02 L16.84 8.51 L16.73 7.99 L16.56 7.47 L16.34 6.97 L16.06 6.48 L15.73 6.01 L15.34 5.56 L14.91 5.14 L14.42 4.75 L13.89 4.40 L13.32 4.10 L12.72 3.83 L12.08 3.62 L11.41 3.45 L10.73 3.34 L10.02 3.28 L9.31 3.28 L8.60 3.33 L7.88 3.45 L7.18 3.62 L6.48 3.85 L5.81 4.14 L5.17 4.48M11.71 10.10 L12.27 9.96 L12.54 9.78 L12.74 9.56 L12.88 9.32 L12.97 9.06 L13.01 8.79 L13.00 8.51 L12.95 8.22 L12.85 7.94 L12.71 7.66 L12.53 7.39 L12.31 7.14 L12.05 6.90 L11.75 6.68 L11.42 6.49 L11.06 6.33 L10.68 6.19 L10.27 6.09 L9.84 6.03 L9.40 6.00 L8.94 6.01 L8.49 6.06 L8.03 6.15 L7.57 6.29 L7.12 6.46 L6.69 6.68 L6.28 6.93 L5.89 7.23 L5.53 7.56 L5.20 7.92 L4.90 8.32 L4.65 8.74 L4.44 9.19 L4.28 9.67 L4.17 10.16 L4.11 10.66 L4.11 11.18 L4.16 11.69 L4.27 12.21 L4.44 12.73 L4.66 13.23 L4.94 13.72 L5.27 14.19 L5.66 14.64 L6.09 15.06 L6.58 15.45 L7.11 15.80 L7.68 16.10 L8.28 16.37 L8.92 16.58 L9.59 16.75 L10.27 16.86 L10.98 16.92 L11.69 16.92 L12.40 16.87 L13.12 16.75 L13.82 16.58 L14.52 16.35 L15.19 16.06 L15.83 15.72" stroke="#ced0d6" stroke-width="1.300" stroke-linecap="round" stroke-linejoin="round"/></svg>
<svg class="a" style="left:1167.00px;top:125.00px;" width="18" height="19" viewBox="0 0 18 19" fill="none"><g stroke="#ced0d6" stroke-width="1.100"><ellipse cx="9" cy="4.200" rx="6.600" ry="2.600"/><path d="M2.400 4.200v10.600c0 1.400 3 2.600 6.600 2.600s6.600-1.200 6.600-2.600V4.200"/><path d="M2.400 7.800c0 1.400 3 2.600 6.600 2.600s6.600-1.200 6.600-2.600M2.400 11.300c0 1.400 3 2.600 6.600 2.600s6.600-1.200 6.600-2.600"/></g></svg>
<div class="a" style="left:5.00px;top:631.20px;width:1189.60px;height:1.00px;background:#1e1f22;"></div>
<div class="a" style="left:5.00px;top:632.20px;width:1189.60px;height:24.80px;background:#2b2d30;"></div>
<div class="a" style="left:17.90px;top:640.80px;width:8.00px;height:8.00px;background:#25324d;border:1.100px solid #5a8cf0;border-radius:2px;box-sizing:border-box;"></div>
<span class="t" style="left:29.50px;top:637.60px;font-size:13px;color:#a5a9b0;letter-spacing:0.357px;">rfc-vote</span>
<svg class="a" style="left:82.40px;top:639.40px;" width="10" height="10" viewBox="0 0 10 10" fill="none"><path d="M3.200 1.400L7 5 3.200 8.600" stroke="#8f939a" stroke-width="1.200" stroke-linecap="round" stroke-linejoin="round"/></svg>
<span class="t" style="left:99.00px;top:637.60px;font-size:13px;color:#a5a9b0;letter-spacing:-0.076px;">resources</span>
<svg class="a" style="left:162.20px;top:639.40px;" width="10" height="10" viewBox="0 0 10 10" fill="none"><path d="M3.200 1.400L7 5 3.200 8.600" stroke="#8f939a" stroke-width="1.200" stroke-linecap="round" stroke-linejoin="round"/></svg>
<span class="t" style="left:178.70px;top:637.60px;font-size:13px;color:#a5a9b0;letter-spacing:0.099px;">views</span>
<svg class="a" style="left:218.30px;top:639.40px;" width="10" height="10" viewBox="0 0 10 10" fill="none"><path d="M3.200 1.400L7 5 3.200 8.600" stroke="#8f939a" stroke-width="1.200" stroke-linecap="round" stroke-linejoin="round"/></svg>
<span class="t" style="left:235.00px;top:637.60px;font-size:13px;color:#a5a9b0;letter-spacing:-0.042px;">layouts</span>
<svg class="a" style="left:282.40px;top:639.40px;" width="10" height="10" viewBox="0 0 10 10" fill="none"><path d="M3.200 1.400L7 5 3.200 8.600" stroke="#8f939a" stroke-width="1.200" stroke-linecap="round" stroke-linejoin="round"/></svg>
<svg class="a" style="left:299.50px;top:637.00px;" width="16" height="16" viewBox="0 0 16 16" fill="none"><path d="M6.650 1.100H12.100V7.500H2.200V5.750H6.650Z" fill="#9aa7b0"/><path d="M5.950 2.100V5.150H2.900Z" fill="#aeb9c0"/><path d="M1 8.800L14.850 8.600 15 15.200 .1 15.400Z" fill="#f26522"/><path d="M.5 12.700L14.900 10.700M3.700 8.700l4 6.300M8.600 10.300l6.200 1.900" stroke="#5a2c18" stroke-width=".8"/></svg>
<span class="t" style="left:318.30px;top:637.60px;font-size:13px;color:#a5a9b0;letter-spacing:-0.040px;">app.blade.php</span>
<span class="t" style="left:732.50px;top:637.60px;font-size:13px;color:#a5a9b0;letter-spacing:-0.278px;">PHP: 8.2</span>
<span class="t" style="left:797.00px;top:637.60px;font-size:13px;color:#a5a9b0;letter-spacing:-0.062px;">Laravel: latest</span>
<span class="t" style="left:892.30px;top:637.60px;font-size:13px;color:#a5a9b0;letter-spacing:-0.166px;">24:41</span>
<span class="t" style="left:939.80px;top:637.60px;font-size:13px;color:#a5a9b0;letter-spacing:-0.786px;">LF</span>
<span class="t" style="left:969.60px;top:637.60px;font-size:13px;color:#a5a9b0;letter-spacing:-0.206px;">UTF-8</span>
<svg class="a" style="left:1020.00px;top:636.00px;" width="16" height="16" viewBox="0 0 16 16" fill="none"><path d="M7.01 8.00 L6.59 8.11 L6.38 8.26 L6.24 8.43 L6.13 8.61 L6.07 8.81 L6.04 9.02 L6.05 9.24 L6.09 9.46 L6.17 9.68 L6.28 9.89 L6.43 10.10 L6.60 10.29 L6.80 10.47 L7.03 10.64 L7.29 10.79 L7.56 10.91 L7.86 11.01 L8.18 11.09 L8.51 11.14 L8.85 11.16 L9.20 11.15 L9.55 11.11 L9.90 11.04 L10.25 10.93 L10.59 10.80 L10.93 10.63 L11.24 10.43 L11.54 10.21 L11.82 9.95 L12.07 9.67 L12.29 9.37 L12.48 9.04 L12.64 8.69 L12.76 8.33 L12.85 7.96 L12.89 7.57 L12.89 7.18 L12.85 6.78 L12.77 6.38 L12.64 5.99 L12.47 5.60 L12.26 5.23 L12.00 4.87 L11.71 4.53 L11.37 4.21 L11.00 3.91 L10.59 3.65 L10.16 3.41 L9.69 3.21 L9.21 3.05 L8.70 2.92 L8.17 2.83 L7.64 2.79 L7.09 2.79 L6.55 2.83 L6.00 2.92 L5.46 3.05 L4.93 3.23 L4.42 3.45 L3.93 3.71M8.99 8.00 L9.41 7.89 L9.62 7.74 L9.76 7.57 L9.87 7.39 L9.93 7.19 L9.96 6.98 L9.95 6.76 L9.91 6.54 L9.83 6.32 L9.72 6.11 L9.57 5.90 L9.40 5.71 L9.20 5.53 L8.97 5.36 L8.71 5.21 L8.44 5.09 L8.14 4.99 L7.82 4.91 L7.49 4.86 L7.15 4.84 L6.80 4.85 L6.45 4.89 L6.10 4.96 L5.75 5.07 L5.41 5.20 L5.07 5.37 L4.76 5.57 L4.46 5.79 L4.18 6.05 L3.93 6.33 L3.71 6.63 L3.52 6.96 L3.36 7.31 L3.24 7.67 L3.15 8.04 L3.11 8.43 L3.11 8.82 L3.15 9.22 L3.23 9.62 L3.36 10.01 L3.53 10.40 L3.74 10.77 L4.00 11.13 L4.29 11.47 L4.63 11.79 L5.00 12.09 L5.41 12.35 L5.84 12.59 L6.31 12.79 L6.79 12.95 L7.30 13.08 L7.83 13.17 L8.36 13.21 L8.91 13.21 L9.45 13.17 L10.00 13.08 L10.54 12.95 L11.07 12.77 L11.58 12.55 L12.07 12.29" stroke="#b4b8bf" stroke-width="1.050" stroke-linecap="round" stroke-linejoin="round"/></svg>
<svg class="a" style="left:1049.50px;top:635.00px;" width="18" height="16.4" viewBox="0 0 22 20" fill="none"><g stroke="#b4b8bf" stroke-width="1.35" stroke-linecap="round"><path d="M6.300 11.400a4 4 0 0 1 4-4h1.300"/><path d="M14.300 11.800v2.400a4 4 0 0 1-8 0v-2.800"/><path d="M7.600 8.100a3 3 0 0 1 4.700-2.700"/><path d="M6.300 11.200H3M6.300 14.200H2.600M7 17l-2.400 1.900M14.300 14.200h3.500M13.600 17l2.400 1.900M6.900 8.600L4.700 6.700"/></g><path d="M14 2.800l5.200 5.200M19.200 2.800L14 8" stroke="#e05555" stroke-width="1.6" stroke-linecap="round"/></svg>
<span class="t" style="left:1081.60px;top:637.60px;font-size:13px;color:#a5a9b0;letter-spacing:-0.129px;">4 spaces</span>
<svg class="a" style="left:1134.50px;top:636.50px;" width="16" height="17" viewBox="0 0 16 17" fill="none"><g stroke="#b4b8bf" stroke-width="1.100" stroke-linecap="round" stroke-linejoin="round"><path d="M6 14.400H3.600a1.400 1.400 0 0 1-1.400-1.400V4.800L5.600 1.400h3.800a1.400 1.400 0 0 1 1.400 1.400v4.400"/><path d="M12.90 12.10 L12.89 12.28 L12.96 12.48 L13.41 12.80 L13.82 13.20 L13.79 13.49 L13.66 13.75 L13.50 13.99 L13.26 14.16 L12.71 14.01 L12.21 13.78 L12.00 13.82 L11.85 13.92 L11.69 14.00 L11.55 14.16 L11.50 14.71 L11.36 15.26 L11.09 15.39 L10.80 15.40 L10.51 15.39 L10.24 15.26 L10.10 14.71 L10.05 14.16 L9.91 14.00 L9.75 13.92 L9.60 13.82 L9.39 13.78 L8.89 14.01 L8.34 14.16 L8.10 13.99 L7.94 13.75 L7.81 13.49 L7.78 13.20 L8.19 12.80 L8.64 12.48 L8.71 12.28 L8.70 12.10 L8.71 11.92 L8.64 11.72 L8.19 11.40 L7.78 11.00 L7.81 10.71 L7.94 10.45 L8.10 10.21 L8.34 10.04 L8.89 10.19 L9.39 10.42 L9.60 10.38 L9.75 10.28 L9.91 10.20 L10.05 10.04 L10.10 9.49 L10.24 8.94 L10.51 8.81 L10.80 8.80 L11.09 8.81 L11.36 8.94 L11.50 9.49 L11.55 10.04 L11.69 10.20 L11.85 10.28 L12.00 10.38 L12.21 10.42 L12.71 10.19 L13.26 10.04 L13.50 10.21 L13.66 10.45 L13.79 10.71 L13.82 11.00 L13.41 11.40 L12.96 11.72 L12.89 11.92Z" stroke-width="1"/></g><circle cx="10.800" cy="12.100" r=".8" fill="#b4b8bf"/></svg>
<svg class="a" style="left:1164.50px;top:637.00px;" width="16" height="14" viewBox="0 0 16 14" fill="none"><g stroke="#b4b8bf" stroke-width="1.100" stroke-linecap="round"><rect x="1.700" y="6.100" width="9.200" height="6.800" rx="1.500"/><path d="M8.700 6.100V4.600a2.400 2.400 0 0 1 4.800 0v1"/></g><path d="M6.300 8.700v1.700" stroke="#b4b8bf" stroke-width="1.200" stroke-linecap="round"/></svg>
</div></div>
<div class="a" id="dlg" style="left:256.3px;top:100.4px;width:686.4000000000001px;height:465.80000000000007px;"></div>
<div class="a" style="left:261.70px;top:105.90px;width:9.40px;height:9.40px;background:#ff5f57;border-radius:50%;"></div>
<div class="a" style="left:276.70px;top:105.90px;width:9.40px;height:9.40px;background:#4c4d54;border-radius:50%;"></div>
<div class="a" style="left:291.70px;top:105.90px;width:9.40px;height:9.40px;background:#28c840;border-radius:50%;"></div>
<span class="t" style="left:550.30px;top:105.15px;font-size:10.1px;color:#9c9fa8;font-weight:700;letter-spacing:-0.037px;">New Eloquent Model</span>
<span class="t" style="left:272.10px;top:150.00px;font-size:13px;color:#dfe1e5;letter-spacing:-0.168px;">Model name:</span>
<div class="a" style="left:352.80px;top:145.20px;width:290.90px;height:21.60px;border:1px solid #4b4d53;box-sizing:border-box;"></div>
<span class="t" style="left:357.90px;top:150.00px;font-size:13px;color:#dfe1e5;letter-spacing:-0.353px;">Post</span>
<span class="t" style="left:650.40px;top:150.00px;font-size:13px;color:#548af7;">?</span>
<span class="t" style="left:662.60px;top:150.00px;font-size:13px;color:#dfe1e5;letter-spacing:-0.166px;">Table name:</span>
<div class="a" style="left:739.10px;top:144.80px;width:185.70px;height:22.80px;border:1px solid #4b4d53;box-sizing:border-box;"></div>
<span class="t" style="left:745.30px;top:150.00px;font-size:13px;color:#dfe1e5;">posts</span>
<div class="a" style="left:276.30px;top:182.80px;width:373.40px;height:222.80px;border:1px solid #1f2023;box-sizing:border-box;"></div>
<span class="t" style="left:281.40px;top:188.70px;font-size:13px;color:#dfe1e5;letter-spacing:-0.320px;">Name</span>
<span class="t" style="left:412.30px;top:188.70px;font-size:13px;color:#dfe1e5;letter-spacing:-0.071px;">Type</span>
<span class="t" style="left:598.40px;top:188.70px;font-size:13px;color:#dfe1e5;letter-spacing:-0.084px;">Nullable</span>
<div class="a" style="left:284.40px;top:209.40px;width:119.40px;height:23.70px;border:1px solid #4b4d53;box-sizing:border-box;"></div>
<span class="t" style="left:290.60px;top:214.50px;font-size:13px;color:#dfe1e5;letter-spacing:0.154px;">title</span>
<div class="a" style="left:414.10px;top:209.70px;width:181.70px;height:23.40px;background:#393b40;border:1px solid #4c4e54;box-sizing:border-box;border-radius:3.5px;"></div>
<span class="t" style="left:419.20px;top:214.70px;font-size:13px;color:#dfe1e5;letter-spacing:0.068px;">string</span>
<svg class="a" style="left:578.60px;top:215.30px;" width="12" height="12" viewBox="0 0 12 12" fill="none"><path d="M2.6 4.3 L6 7.7 L9.4 4.3" stroke="#b4b8bf" stroke-width="1.1" stroke-linecap="round" stroke-linejoin="round"/></svg>
<div class="a" style="left:615.10px;top:214.40px;width:12.80px;height:12.80px;border:1px solid #64676e;border-radius:2.400px;box-sizing:border-box;"></div>
<div class="a" style="left:284.40px;top:242.22px;width:119.40px;height:23.70px;border:1px solid #4b4d53;box-sizing:border-box;"></div>
<span class="t" style="left:290.60px;top:247.45px;font-size:13px;color:#dfe1e5;letter-spacing:-0.153px;">published_at</span>
<div class="a" style="left:414.10px;top:242.52px;width:181.70px;height:23.40px;background:#393b40;border:1px solid #4c4e54;box-sizing:border-box;border-radius:3.5px;"></div>
<span class="t" style="left:419.20px;top:247.65px;font-size:13px;color:#dfe1e5;letter-spacing:0.042px;">datetime</span>
<svg class="a" style="left:578.60px;top:248.12px;" width="12" height="12" viewBox="0 0 12 12" fill="none"><path d="M2.6 4.3 L6 7.7 L9.4 4.3" stroke="#b4b8bf" stroke-width="1.1" stroke-linecap="round" stroke-linejoin="round"/></svg>
<div class="a" style="left:615.10px;top:247.22px;width:12.80px;height:12.80px;background:#3574f0;border-radius:2.600px;"></div>
<svg class="a" style="left:615.10px;top:247.22px;" width="12.8" height="12.8" viewBox="0 0 12.800 12.800" fill="none"><path d="M3.100 6.700l2.500 2.500 4.400-5.300" stroke="#fff" stroke-width="1.700" stroke-linecap="round" stroke-linejoin="round"/></svg>
<div class="a" style="left:284.40px;top:275.04px;width:119.40px;height:23.70px;border:1px solid #4b4d53;box-sizing:border-box;"></div>
<span class="t" style="left:290.60px;top:280.40px;font-size:13px;color:#dfe1e5;letter-spacing:0.027px;">body</span>
<div class="a" style="left:412.30px;top:273.14px;width:185.50px;height:27.00px;background:#393b40;border:2px solid #3574f0;border-radius:5px;box-sizing:border-box;"></div>
<span class="t" style="left:419.20px;top:280.60px;font-size:13px;color:#dfe1e5;">longText</span>
<svg class="a" style="left:578.60px;top:280.94px;" width="12" height="12" viewBox="0 0 12 12" fill="none"><path d="M2.6 4.3 L6 7.7 L9.4 4.3" stroke="#b4b8bf" stroke-width="1.1" stroke-linecap="round" stroke-linejoin="round"/></svg>
<div class="a" style="left:615.10px;top:280.04px;width:12.80px;height:12.80px;border:1px solid #64676e;border-radius:2.400px;box-sizing:border-box;"></div>
<div class="a" style="left:284.10px;top:308.30px;width:111.40px;height:23.70px;border:1px solid #4b4d53;box-sizing:border-box;border-radius:3.5px;"></div>
<span class="t" style="left:298.20px;top:313.50px;font-size:13px;color:#dfe1e5;letter-spacing:-0.111px;">Add New Field</span>
<div class="a" style="left:659.20px;top:185.70px;width:12.80px;height:12.80px;background:#3574f0;border-radius:2.600px;"></div>
<svg class="a" style="left:659.20px;top:185.70px;" width="12.8" height="12.8" viewBox="0 0 12.800 12.800" fill="none"><path d="M3.100 6.700l2.500 2.500 4.400-5.300" stroke="#fff" stroke-width="1.700" stroke-linecap="round" stroke-linejoin="round"/></svg>
<span class="t" style="left:678.10px;top:185.60px;font-size:13px;color:#dfe1e5;letter-spacing:0.025px;">id field (id)</span>
<div class="a" style="left:659.20px;top:205.85px;width:12.80px;height:12.80px;background:#3574f0;border-radius:2.600px;"></div>
<svg class="a" style="left:659.20px;top:205.85px;" width="12.8" height="12.8" viewBox="0 0 12.800 12.800" fill="none"><path d="M3.100 6.700l2.500 2.500 4.400-5.300" stroke="#fff" stroke-width="1.700" stroke-linecap="round" stroke-linejoin="round"/></svg>
<span class="t" style="left:678.10px;top:205.75px;font-size:13px;color:#dfe1e5;letter-spacing:-0.047px;">timestamps (created_at, updated_at)</span>
<div class="a" style="left:659.20px;top:226.00px;width:12.80px;height:12.80px;border:1px solid #64676e;border-radius:2.400px;box-sizing:border-box;"></div>
<span class="t" style="left:678.10px;top:225.90px;font-size:13px;color:#dfe1e5;letter-spacing:0.025px;">soft deletes (deleted_at)</span>
<div class="a" style="left:659.20px;top:246.15px;width:12.80px;height:12.80px;border:1px solid #64676e;border-radius:2.400px;box-sizing:border-box;"></div>
<span class="t" style="left:678.10px;top:246.05px;font-size:13px;color:#dfe1e5;letter-spacing:0.016px;">add $fillable array to the model class</span>
<span class="t" style="left:658.80px;top:322.02px;font-size:12.5px;color:#dfe1e5;letter-spacing:0.125px;">Please use the Tab, Shift-Tab, and Space</span>
<span class="t" style="left:658.80px;top:337.12px;font-size:12.5px;color:#dfe1e5;letter-spacing:0.153px;">keys to manage this window from a keyboard.</span>
<span class="t" style="left:658.80px;top:366.72px;font-size:12.5px;color:#dfe1e5;letter-spacing:0.075px;">This UI is still under development.</span>
<span class="t" style="left:658.80px;top:389.02px;font-size:12.5px;color:#548af7;letter-spacing:0.144px;">Discussion here.</span>
<svg class="a" style="left:756.50px;top:390.50px;" width="10" height="10" viewBox="0 0 10 10" fill="none"><path d="M2.200 7.800l5.400-5.400M3.400 2.200h4.400v4.400" stroke="#b4b8bf" stroke-width="1" stroke-linecap="round" stroke-linejoin="round"/></svg>
<div class="a" style="left:278.80px;top:427.50px;width:12.80px;height:12.80px;background:#3574f0;border-radius:2.600px;"></div>
<svg class="a" style="left:278.80px;top:427.50px;" width="12.8" height="12.8" viewBox="0 0 12.800 12.800" fill="none"><path d="M3.100 6.700l2.500 2.500 4.400-5.300" stroke="#fff" stroke-width="1.700" stroke-linecap="round" stroke-linejoin="round"/></svg>
<span class="t" style="left:298.20px;top:426.70px;font-size:13px;color:#dfe1e5;letter-spacing:0.003px;">Migration</span>
<div class="a" style="left:358.60px;top:422.30px;width:212.00px;height:23.40px;border:1px solid #4b4d53;box-sizing:border-box;"></div>
<span class="t" style="left:365.10px;top:426.90px;font-size:13px;color:#dfe1e5;letter-spacing:-0.092px;">create_posts_table</span>
<div class="a" style="left:278.80px;top:460.50px;width:12.80px;height:12.80px;background:#3574f0;border-radius:2.600px;"></div>
<svg class="a" style="left:278.80px;top:460.50px;" width="12.8" height="12.8" viewBox="0 0 12.800 12.800" fill="none"><path d="M3.100 6.700l2.500 2.500 4.400-5.300" stroke="#fff" stroke-width="1.700" stroke-linecap="round" stroke-linejoin="round"/></svg>
<span class="t" style="left:298.20px;top:459.70px;font-size:13px;color:#dfe1e5;letter-spacing:0.020px;">Database factory</span>
<div class="a" style="left:403.50px;top:455.30px;width:167.10px;height:23.40px;border:1px solid #4b4d53;box-sizing:border-box;"></div>
<span class="t" style="left:410.00px;top:459.90px;font-size:13px;color:#dfe1e5;letter-spacing:-0.023px;">PostFactory</span>
<div class="a" style="left:278.80px;top:493.50px;width:12.80px;height:12.80px;border:1px solid #64676e;border-radius:2.400px;box-sizing:border-box;"></div>
<span class="t" style="left:298.20px;top:492.70px;font-size:13px;color:#dfe1e5;letter-spacing:-0.042px;">Json resource</span>
<div class="a" style="left:386.20px;top:488.30px;width:184.40px;height:23.40px;border:1px solid #43454a;box-sizing:border-box;"></div>
<span class="t" style="left:392.70px;top:492.90px;font-size:13px;color:#5d6067;letter-spacing:-0.188px;">PostResource</span>
<div class="a" style="left:613.30px;top:427.50px;width:12.80px;height:12.80px;border:1px solid #64676e;border-radius:2.400px;box-sizing:border-box;"></div>
<span class="t" style="left:632.30px;top:426.70px;font-size:13px;color:#dfe1e5;letter-spacing:-0.195px;">REST-API Controller</span>
<div class="a" style="left:754.40px;top:422.30px;width:166.10px;height:23.40px;border:1px solid #43454a;box-sizing:border-box;"></div>
<span class="t" style="left:761.10px;top:426.90px;font-size:13px;color:#5d6067;letter-spacing:-0.048px;">PostController</span>
<div class="a" style="left:613.30px;top:460.50px;width:12.80px;height:12.80px;border:1px solid #64676e;border-radius:2.400px;box-sizing:border-box;"></div>
<span class="t" style="left:632.30px;top:459.70px;font-size:13px;color:#dfe1e5;letter-spacing:-0.084px;">Form request</span>
<div class="a" style="left:716.30px;top:455.30px;width:204.20px;height:23.40px;border:1px solid #43454a;box-sizing:border-box;"></div>
<span class="t" style="left:723.00px;top:459.90px;font-size:13px;color:#5d6067;letter-spacing:-0.185px;">PostRequest</span>
<div class="a" style="left:613.30px;top:493.50px;width:12.80px;height:12.80px;border:1px solid #64676e;border-radius:2.400px;box-sizing:border-box;"></div>
<span class="t" style="left:632.30px;top:492.70px;font-size:13px;color:#dfe1e5;letter-spacing:-0.163px;">Policy</span>
<div class="a" style="left:673.70px;top:488.30px;width:246.80px;height:23.40px;border:1px solid #43454a;box-sizing:border-box;"></div>
<span class="t" style="left:680.40px;top:492.90px;font-size:13px;color:#5d6067;letter-spacing:-0.109px;">PostPolicy</span>
<div class="a" style="left:270.00px;top:534.00px;width:21.20px;height:21.20px;border:1px solid #56595f;border-radius:50%;box-sizing:border-box;"></div>
<span class="t" style="left:276.00px;top:536.81px;font-size:17px;color:#c4c7cd;-webkit-text-stroke:0;">?</span>
<div class="a" style="left:296.90px;top:533.40px;width:74.50px;height:22.40px;border:1px solid #4b4d53;box-sizing:border-box;border-radius:3px;"></div>
<span class="t" style="left:310.70px;top:538.30px;font-size:13px;color:#dfe1e5;letter-spacing:0.041px;">Settings</span>
<div class="a" style="left:783.20px;top:533.40px;width:67.80px;height:22.40px;border:1px solid #4b4d53;box-sizing:border-box;border-radius:3px;"></div>
<span class="t" style="left:797.60px;top:538.30px;font-size:13px;color:#dfe1e5;letter-spacing:-0.145px;">Cancel</span>
<div class="a" style="left:861.50px;top:533.40px;width:68.00px;height:22.40px;background:#3574f0;border-radius:3px;"></div>
<span class="t" style="left:887.50px;top:538.30px;font-size:13px;color:#ffffff;letter-spacing:-0.941px;">OK</span>
</body></html>
